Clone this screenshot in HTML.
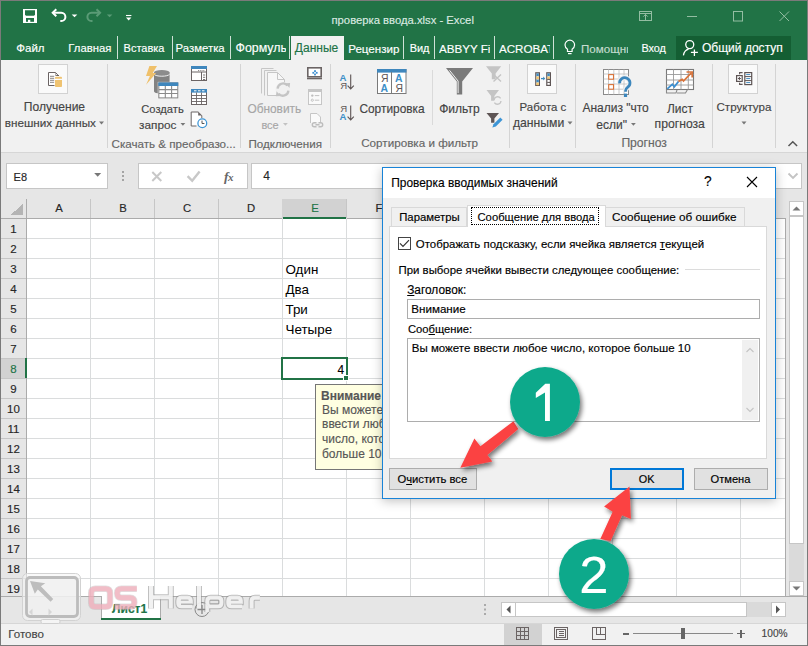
<!DOCTYPE html>
<html><head><meta charset="utf-8">
<style>
*{margin:0;padding:0;box-sizing:border-box}
html,body{width:808px;height:646px;overflow:hidden;background:#fff}
body{position:relative;font-family:"Liberation Sans",sans-serif;font-size:12px;color:#444}
.a{position:absolute}
.t{position:absolute;white-space:nowrap;line-height:1;-webkit-text-stroke:.15px currentColor}
svg{position:absolute;overflow:visible}
</style></head><body>
<!-- title bar + tabs -->
<div class="a" style="left:0;top:0;width:808px;height:60px;background:#217346"></div>
<!-- QAT -->
<svg style="left:0;top:0" width="140" height="34">
 <rect x="23" y="9" width="14" height="14" fill="#fff"/>
 <path d="M25 10.2h10v4.6l-1 1h-8l-1-1z" fill="#217346"/>
 <rect x="26" y="18" width="8" height="3.8" fill="#217346"/>
 <rect x="28" y="19.8" width="2.3" height="2.2" fill="#fff"/>
 <g fill="none" stroke="#fff" stroke-width="2">
  <path d="M53 12.8h8.3a4.1 4.1 0 0 1 0 8.2h-1"/>
  <path d="M56.3 9.3l-3.6 3.5 3.6 3.5"/>
 </g>
 <path d="M71.7 14.5h5.6l-2.8 2.8z" fill="#fff"/>
 <g fill="none" stroke="#5a9b76" stroke-width="2">
  <path d="M99.8 12.8h-8.3a4.1 4.1 0 0 0 0 8.2h1"/>
  <path d="M96.5 9.3l3.6 3.5-3.6 3.5"/>
 </g>
 <path d="M106.8 14.5h5.6l-2.8 2.8z" fill="#5a9b76"/>
 <path d="M126 15.5h5.4" stroke="#fff" stroke-width="1.1"/>
 <path d="M126 17.5h5.4l-2.7 3z" fill="#fff"/>
</svg>
<div class="t" style="left:331.50px;top:15px;font-size:11.27px;color:#dbeae1">проверка ввода.xlsx - Excel</div>
<!-- window controls -->
<svg style="left:0;top:0" width="808" height="34">
 <g fill="none" stroke="#93bda2" stroke-width="1">
  <rect x="639.5" y="11.5" width="12" height="9"/>
  <path d="M639.5 13.5h12M645.5 20.5v-6M643.3 16.6l2.2-2.2 2.2 2.2"/>
  <path d="M687 16.5h10" />
  <rect x="733.5" y="11.5" width="9" height="9.5"/>
  <path d="M779.5 11.5l9.5 9.5M789 11.5l-9.5 9.5"/>
 </g>
</svg>
<!-- tabs -->
<div class="t" style="left:16.30px;top:43px;font-size:11.51px;color:#fff">Файл</div>
<div class="t" style="left:68.30px;top:43px;font-size:11.32px;color:#fff">Главная</div>
<div class="a" style="left:117px;top:36px;width:1px;height:23px;background:#cfe1d6"></div>
<div class="t" style="left:123.60px;top:43px;font-size:11.00px;color:#fff">Вставка</div>
<div class="a" style="left:172px;top:36px;width:1px;height:23px;background:#cfe1d6"></div>
<div class="t" style="left:175.60px;top:43px;font-size:11.36px;color:#fff">Разметка</div>
<div class="a" style="left:230px;top:36px;width:1px;height:23px;background:#cfe1d6"></div>
<div class="a" style="left:235px;top:36px;width:50.5px;height:24px;overflow:hidden"><div class="t" style="left:0.50px;top:6px;font-size:12.40px;color:#fff">Формулы</div></div>
<div class="a" style="left:289px;top:36px;width:1px;height:23px;background:#cfe1d6"></div>
<div class="a" style="left:291px;top:36px;width:53px;height:24px;background:#f1f1f1"></div>
<div class="t" style="left:294.80px;top:42px;font-size:12.04px;color:#217346">Данные</div>
<div class="t" style="left:348.20px;top:43px;font-size:11.60px;color:#fff">Рецензир</div>
<div class="a" style="left:403px;top:36px;width:1px;height:23px;background:#cfe1d6"></div>
<div class="t" style="left:409.70px;top:43px;font-size:10.94px;color:#fff">Вид</div>
<div class="a" style="left:434px;top:36px;width:1px;height:23px;background:#cfe1d6"></div>
<div class="a" style="left:439px;top:36px;width:51px;height:24px;overflow:hidden"><div class="t" style="left:0.00px;top:7px;font-size:11.60px;color:#fff">ABBYY FineReader</div></div>
<div class="a" style="left:494px;top:36px;width:1px;height:23px;background:#cfe1d6"></div>
<div class="a" style="left:499px;top:36px;width:51px;height:24px;overflow:hidden"><div class="t" style="left:0.00px;top:7px;font-size:11.60px;color:#fff">ACROBAT</div></div>
<div class="a" style="left:553px;top:36px;width:1px;height:23px;background:#cfe1d6"></div>
<svg style="left:561.5px;top:38px" width="16" height="20">
 <g fill="none" stroke="#fff" stroke-width="1.2">
  <path d="M5.5 13.5v-2.3C3.8 10 3 8.6 3 7a4.8 4.8 0 0 1 9.6 0c0 1.6-.8 3-2.5 4.2v2.3z"/>
  <path d="M6 15.6h3.6"/>
 </g>
</svg>
<div class="a" style="left:581px;top:36px;width:47px;height:24px;overflow:hidden"><div class="t" style="left:0.00px;top:7px;font-size:11.60px;color:#c6ddd0">Помощник</div></div>
<div class="t" style="left:641.40px;top:43px;font-size:10.87px;color:#fff">Вход</div>
<div class="a" style="left:676px;top:36px;width:115px;height:24px;background:#145e33"></div>
<svg style="left:680px;top:38px" width="22" height="22">
 <g fill="none" stroke="#fff" stroke-width="1.3">
  <circle cx="9.75" cy="6.6" r="4"/>
  <path d="M8.6 11.1C6 11.6 4 14 3.4 17.4"/>
  <path d="M14.4 11.4v6.5M10.9 14.4h7"/>
 </g>
</svg>
<div class="t" style="left:701.90px;top:42px;font-size:12.06px;color:#fff">Общий доступ</div>

<!-- ribbon -->
<div class="a" style="left:0;top:60px;width:808px;height:93px;background:#f1f1f1;border-bottom:1px solid #d6d6d6"></div>
<!-- ribbon separators -->
<svg style="left:0;top:0" width="808" height="160" shape-rendering="crispEdges">
 <path d="M107.5 64v84M240.5 64v84M330.5 64v84M509.5 64v84M575.5 64v84M712.5 64v84M775.5 64v84" stroke="#d4d4d4"/>
 <path d="M432.5 70v55" stroke="#dadada"/>
</svg>
<!-- group 1: Получение внешних данных -->
<div class="a" style="left:38px;top:64px;width:30px;height:30px;background:#fafafa;border:1px solid #d2d2d2"></div>
<svg style="left:0;top:0" width="808" height="160">
 <path d="M54.5 85.5h-6v-13h7l3.5 3.5" fill="#fff" stroke="#6b6464" stroke-width="1"/>
 <path d="M55.5 72.5l3.5 3.5h-3.5z" fill="#6b6464"/>
 <circle cx="56.6" cy="74.6" r=".7" fill="#fff"/>
 <path d="M50 76.3h4.2M50 78.3h4.2M50 80.3h4.2M50 82.3h4.2" stroke="#8a8585" stroke-width="1"/>
 <path d="M55 77.5q0-.8 1-.8h5q1 0 1 .8v1.3h-7z" fill="#efc371"/>
 <path d="M55 80h7v6.3q0 .8-1 .8h-5q-1 0-1-.8z" fill="#efc371"/>
</svg>
<div class="t" style="left:23.80px;top:101px;font-size:12.07px;color:#444">Получение</div>
<div class="t" style="left:4.80px;top:117px;font-size:11.70px;color:#444">внешних данных</div>
<svg style="left:0;top:0" width="808" height="160">
 <path d="M99 121.5h5l-2.5 3z" fill="#777"/>
</svg>
<!-- group 2: Скачать и преобразовать -->
<svg style="left:0;top:0" width="808" height="160">
 <path d="M154 72.6v18.6c0 1.6 3.5 2.4 7.8 2.4s7.8-.8 7.8-2.4V72.6z" fill="#828282"/>
 <ellipse cx="161.8" cy="72.6" rx="7.8" ry="2.6" fill="#8c8c8c"/>
 <path d="M154 74.2c1 1.3 4 2 7.8 2s6.8-.7 7.8-2" stroke="#fff" stroke-width=".9" fill="none"/>
 <path d="M149.4 66h7.6l-4.3 7h3.4l-10 11.8 3.8-8.8h-3.9z" fill="#efc06a"/>
 <rect x="157.8" y="81.9" width="21" height="17" fill="#fff"/>
 <rect x="158.8" y="82.9" width="19" height="15" fill="#fff" stroke="#8a8a8a" stroke-width="1.1"/>
 <rect x="158.3" y="82.4" width="20" height="3.6" fill="#3f87bd"/>
 <path d="M158.8 89.6h19M158.8 93.5h19M165.3 86v12M171.6 86v12" stroke="#8a8a8a" stroke-width="1.1"/>
 <!-- small icons -->
 <rect x="191.5" y="66.5" width="15" height="14" fill="#fff" stroke="#6b6464"/>
 <rect x="191" y="66" width="16" height="3" fill="#3f87bd"/>
 <path d="M191.5 72h15M201.5 72v9" stroke="#6b6464"/>
 <path d="M198 70.6h.9M199.8 70.6h.9M201.6 70.6h.9M203.4 70.6h.9" stroke="#6b6464" stroke-width=".9"/>
 <path d="M203 75h2.2M203 77.3h2.2M203 79.5h2.2" stroke="#6b6464" stroke-width=".9"/>
 <rect x="191.5" y="89.5" width="15" height="15" fill="#fff" stroke="#6b6464"/>
 <rect x="191" y="89" width="16" height="3.6" fill="#3f87bd"/>
 <path d="M194 90.8h2.5M198 90.8h2.5M202 90.8h2.5" stroke="#fff" stroke-width="1"/>
 <path d="M191.5 95.5h15M191.5 98.5h15M191.5 101.5h15M196.5 92.5v12M201.5 92.5v12" stroke="#6b6464" stroke-width=".9"/>
 <path d="M196.5 126h-5.3v-14h7l3.6 3.6v2.5" fill="#fff" stroke="#6b6464" stroke-width="1"/>
 <path d="M198.2 112v3.6h3.6z" fill="#6b6464"/>
 <circle cx="202.3" cy="123.2" r="4.4" fill="#fff" stroke="#3d95d6" stroke-width="1.3"/>
 <path d="M202 120.6v2.9h2.4" stroke="#555" stroke-width="1" fill="none"/>
</svg>
<div class="t" style="left:141.30px;top:104px;font-size:11.16px;color:#444">Создать</div>
<div class="t" style="left:139.10px;top:119px;font-size:11.77px;color:#444">запрос</div>
<svg style="left:0;top:0" width="808" height="160">
 <path d="M180.5 123h4.8l-2.4 2.8z" fill="#777"/>
</svg>
<div class="t" style="left:111.60px;top:138px;font-size:11.61px;color:#666">Скачать &amp; преобразо...</div>
<!-- group 3: Подключения -->
<svg style="left:0;top:0" width="808" height="160">
 <path d="M261.5 93.5v-25h12" fill="none" stroke="#c6c6c6"/>
 <path d="M264.5 95.5v-25h12" fill="none" stroke="#c6c6c6"/>
 <path d="M267.5 95.5v-23h10l7 7v16z" fill="#f7f7f7" stroke="#c6c6c6"/>
 <path d="M277.5 72.5v7h7" fill="none" stroke="#c6c6c6"/>
 <circle cx="283" cy="89.6" r="7.5" fill="#f1f1f1"/>
 <g fill="none" stroke="#c4c4c4" stroke-width="2.3">
  <path d="M277.6 88.6a5.5 5.5 0 0 1 9.8-3"/>
  <path d="M288.4 90.6a5.5 5.5 0 0 1-9.8 3"/>
 </g>
 <path d="M285.3 83.3l4.8-.3-.6 5z" fill="#c4c4c4"/>
 <path d="M280.7 95.9l-4.8.3.6-5z" fill="#c4c4c4"/>
 <rect x="307.8" y="67.8" width="13.4" height="9" fill="#fff" stroke="#6b6464" stroke-width="1.6"/>
 <path d="M307 78.6h15" stroke="#6b6464" stroke-width="1.4"/>
 <g fill="#3d8fd1"><rect x="314.1" y="70.2" width="1.8" height="1.8"/><rect x="314.1" y="73.6" width="1.8" height="1.8"/><rect x="312.4" y="71.9" width="1.8" height="1.8"/><rect x="315.8" y="71.9" width="1.8" height="1.8"/></g>
 <rect x="308.5" y="89.5" width="13" height="15" fill="#fafafa" stroke="#c6c6c6"/>
 <rect x="308" y="89" width="14" height="3" fill="#c6c6c6"/>
 <circle cx="312.3" cy="95.6" r="1.2" fill="#bdbdbd"/><circle cx="312.3" cy="100.2" r="1.1" fill="none" stroke="#bdbdbd" stroke-width=".9"/>
 <path d="M314.8 95.6h4.5M314.8 100.2h4.5" stroke="#c2c2c2"/>
 <path d="M310.5 123v-9.5h6.5l3.5 3.5v5" fill="#fafafa" stroke="#c6c6c6"/>
 <path d="M316.5 126.8h-2.2a2 2 0 0 1 0-4h2.2M318.5 122.8h2.2a2 2 0 0 1 0 4h-2.2M315.5 124.8h4" fill="none" stroke="#bdbdbd" stroke-width="1.4"/>
 <path d="M283 123h4.8l-2.4 2.8z" fill="#c2c2c2"/>
</svg>
<div class="t" style="left:247.40px;top:104px;font-size:11.88px;color:#a6a6a6">Обновить</div>
<div class="t" style="left:261.40px;top:120px;font-size:10.98px;color:#a6a6a6">все</div>
<div class="t" style="left:248.50px;top:138px;font-size:11.62px;color:#666">Подключения</div>
<!-- group 4: Сортировка и фильтр -->
<svg style="left:0;top:0" width="808" height="160">
 <g font-family="Liberation Sans" font-size="9.6">
 <text x="339.6" y="81.4" font-weight="bold" fill="#3d8fc8">A</text>
 <text x="340.2" y="89" fill="#5e5555">Я</text>
 <text x="340.2" y="112.2" fill="#5e5555">Я</text>
 <text x="339.6" y="120" font-weight="bold" fill="#3d8fc8">A</text>
 </g>
 <path d="M350.7 74.5v14.3M347.6 85.6l3.1 3.3 3.1-3.3" fill="none" stroke="#5e5555" stroke-width="1.1"/>
 <path d="M350.7 105.5v14.3M347.6 116.6l3.1 3.3 3.1-3.3" fill="none" stroke="#5e5555" stroke-width="1.1"/>
 <rect x="377.5" y="69.5" width="28.5" height="24" fill="#fff" stroke="#7a7a7a"/>
 <rect x="377" y="69" width="29.5" height="3.6" fill="#3f87bd"/>
 <path d="M391.5 72v21.5" stroke="#7a7a7a"/>
 <g font-family="Liberation Sans" font-size="10.4">
  <text x="381" y="82" fill="#5e5555">Я</text><text x="380.5" y="92" fill="#3d8fc8" font-weight="bold">A</text>
  <text x="395" y="82" fill="#3d8fc8" font-weight="bold">A</text><text x="395.5" y="92" fill="#5e5555">Я</text>
 </g>
 <path d="M446 68h27l-10.8 13.5v13h-5.4v-13z" fill="#7a7a7a"/>
 <path d="M449.5 70.3l8.6 10.8v12" stroke="#fff" stroke-width=".9" fill="none"/>
 <path d="M486 66.3h15.2l-5.6 7.2v5.8h-3.8v-5.8z" fill="#c4c4c4"/>
 <path d="M493.5 74.5l7.5 7M501 74.5l-7.5 7" stroke="#c4c4c4" stroke-width="1.4"/>
 <path d="M486.5 90h12.5l-4.6 6v4.8h-3.3v-4.8z" fill="#c4c4c4"/>
 <path d="M494 100a3.6 3.6 0 0 1 6.6-1.6M501 101a3.6 3.6 0 0 1-6.6 1.6" stroke="#c4c4c4" stroke-width="1.3" fill="none"/>
 <path d="M486.5 113h12.5l-4.6 5.4v4.4h-3.3v-4.4z" fill="#5e5555"/>
 <path d="M492.3 127.6l1.2-3.4 6.8-6.8 2.3 2.3-6.8 6.8z" fill="#3d95d6"/>
</svg>
<div class="t" style="left:359.40px;top:104px;font-size:11.90px;color:#444">Сортировка</div>
<div class="t" style="left:439.20px;top:103px;font-size:12.06px;color:#444">Фильтр</div>
<div class="t" style="left:361.20px;top:137px;font-size:11.66px;color:#666">Сортировка и фильтр</div>
<!-- group 5: Работа с данными -->
<div class="a" style="left:527px;top:64px;width:30px;height:30px;background:#fafafa;border:1px solid #d2d2d2"></div>
<svg style="left:0;top:0" width="808" height="160">
 <rect x="535.8" y="72.8" width="3.6" height="12.6" fill="#fff" stroke="#5e5555" stroke-width="1.2"/>
 <rect x="536.4" y="73.4" width="2.4" height="2.8" fill="#3f8bc0"/><rect x="536.4" y="76.5" width="2.4" height="2.8" fill="#f5c76d"/>
 <rect x="536.4" y="79.6" width="2.4" height="2.8" fill="#3f8bc0"/><rect x="536.4" y="82.6" width="2.4" height="2.6" fill="#f5c76d"/>
 <rect x="546.8" y="72.8" width="3.6" height="12.6" fill="#fff" stroke="#5e5555" stroke-width="1.2"/>
 <rect x="547.4" y="73.4" width="2.4" height="2.8" fill="#3f8bc0"/><rect x="547.4" y="76.5" width="2.4" height="2.8" fill="#f5c76d"/>
 <path d="M547.2 79.4h2.8M547.2 82.4h2.8" stroke="#5e5555" stroke-width="1"/>
 <path d="M541 78.6h3.4" stroke="#3f8bc0" stroke-width="1.3"/>
 <path d="M543.2 76.6l2 2-2 2z" fill="#3f8bc0"/>
 <path d="M567.5 121.5h5l-2.5 3z" fill="#777"/>
</svg>
<div class="t" style="left:519.60px;top:102px;font-size:11.48px;color:#444">Работа с</div>
<div class="t" style="left:512.90px;top:117px;font-size:12.19px;color:#444">данными</div>
<!-- group 6: Прогноз -->
<svg style="left:0;top:0" width="808" height="160">
 <rect x="603.5" y="69.5" width="25" height="25" fill="#fff" stroke="#8a8a8a" stroke-width="1"/>
 <path d="M603.5 74h25M603.5 79h25M603.5 84h25M603.5 89.2h25M608.5 69.5v25M613.8 69.5v25M619 69.5v25M624 69.5v25" stroke="#bdbdbd" stroke-width=".8"/>
 <rect x="608.7" y="74.6" width="4.8" height="4.6" fill="#fff" stroke="#d9733a" stroke-width="1.1"/>
 <rect x="608.7" y="84.6" width="4.8" height="4.6" fill="#fff" stroke="#d9733a" stroke-width="1.1"/>
 <path d="M617 78h15v20h-15z" fill="#fff" opacity="0"/>
 <path d="M619.6 83.3a5.2 5.2 0 1 1 8.2 3.8c-1.6 1.1-2.3 2-2.3 4v.6" stroke="#f1f1f1" stroke-width="5" fill="none"/>
 <path d="M619.6 83.3a5.2 5.2 0 1 1 8.2 3.8c-1.6 1.1-2.3 2-2.3 4v.6" stroke="#3d87bd" stroke-width="2.8" fill="none"/>
 <rect x="623.9" y="93.6" width="3.2" height="3.4" fill="#3d87bd"/>
 <rect x="666.5" y="69.5" width="27" height="20" fill="#fff" stroke="#7a7a7a" stroke-width="1.1"/>
 <path d="M666.5 74.5h27M666.5 80h27M666.5 85h27M673.5 69.5v20M681 69.5v20M688.3 69.5v20" stroke="#9a9a9a" stroke-width=".9"/>
 <path d="M666.5 89.5v3.5h9.5l1-3M677 93h8.5l2-3.5" fill="none" stroke="#8a8a8a" stroke-width="1.1"/>
 <path d="M667.3 88.8l5-4.5 2 2.5 4.3-5.4" stroke="#3d8fd1" stroke-width="1.7" fill="none"/>
 <path d="M678.4 81.6l3.8-2.2 1.3 1.6 8-8.4" stroke="#d9733a" stroke-width="1.7" fill="none"/>
 <path d="M686.5 72h5.7v5.5" stroke="#d9733a" stroke-width="1.7" fill="none"/>
 <path d="M631 123h4.8l-2.4 2.8z" fill="#777"/>
</svg>
<div class="t" style="left:582.40px;top:102px;font-size:12.00px;color:#444">Анализ "что</div>
<div class="t" style="left:596.20px;top:119px;font-size:12.06px;color:#444">если"</div>
<div class="t" style="left:667.00px;top:104px;font-size:11.97px;color:#444">Лист</div>
<div class="t" style="left:654.60px;top:118px;font-size:12.18px;color:#444">прогноза</div>
<div class="t" style="left:621.40px;top:137px;font-size:12.15px;color:#666">Прогноз</div>
<!-- group 7: Структура -->
<div class="a" style="left:728px;top:64px;width:30px;height:30px;background:#fafafa;border:1px solid #d2d2d2"></div>
<svg style="left:0;top:0" width="808" height="160">
 <rect x="736.6" y="75.6" width="5.6" height="5.8" fill="#fff" stroke="#5e5555" stroke-width="1.2"/>
 <path d="M737.9 78.5h3M739.4 77v3" stroke="#5e5555" stroke-width="1"/>
 <path d="M739.6 74.2v-1.6h3M739.6 82.8v1.6h3" stroke="#5e5555" stroke-width="1.1" fill="none"/>
 <rect x="744.8" y="72.6" width="6.9" height="12" fill="#fff" stroke="#5e5555" stroke-width="1.2"/>
 <path d="M744.8 76.6h6.9M744.8 80.6h6.9" stroke="#5e5555" stroke-width="1"/>
 <path d="M746.2 74.6h4M746.2 78.6h4M746.2 82.6h4" stroke="#3f8bc0" stroke-width="1"/>
 <path d="M741.5 121.5h5l-2.5 3z" fill="#777"/>
 <path d="M788.5 146l4.3-4.3 4.3 4.3" stroke="#555" stroke-width="1.5" fill="none"/>
</svg>
<div class="t" style="left:716.50px;top:102px;font-size:11.57px;color:#444">Структура</div>

<!-- formula bar area -->
<div class="a" style="left:0;top:153px;width:808px;height:46px;background:#e6e6e6"></div>
<div class="a" style="left:6px;top:163px;width:102px;height:26px;background:#fff;border:1px solid #c6c6c6"></div>
<div class="t" style="left:13.60px;top:172px;font-size:11.04px;color:#262626">E8</div>
<svg style="left:0;top:0" width="808" height="200">
 <path d="M94.2 173h7l-3.5 3.8z" fill="#777"/>
 <g fill="#a4a4a4"><rect x="122" y="171" width="2" height="2"/><rect x="122" y="175" width="2" height="2"/><rect x="122" y="179" width="2" height="2"/></g>
</svg>
<div class="a" style="left:138px;top:163px;width:110px;height:26px;background:#fff;border:1px solid #c6c6c6"></div>
<svg style="left:0;top:0" width="808" height="200">
 <g stroke="#c8c8c8" stroke-width="2" fill="none">
  <path d="M152.3 172l9 9M161.3 172l-9 9"/>
  <path d="M187.6 176.2l4.6 4.6 7.4-9.4" stroke-width="2.4"/>
 </g>
</svg>
<div class="t" style="left:224px;top:170px;font-family:'Liberation Serif';font-style:italic;font-weight:bold;font-size:13.5px;color:#666;-webkit-text-stroke:0">f<span style="font-size:11px;margin-left:-.5px">x</span></div>
<div class="a" style="left:251px;top:163px;width:551px;height:26px;background:#fff;border:1px solid #c6c6c6"></div>
<div class="t" style="left:263.20px;top:170px;font-size:12.04px;color:#262626">4</div>
<svg style="left:0;top:0" width="808" height="200">
 <path d="M788.5 173.5l4.5 4.5 4.5-4.5" stroke="#c4c4c4" stroke-width="1.9" fill="none"/>
</svg>

<!-- grid -->
<div class="a" style="left:0;top:199px;width:786px;height:19px;background:#e6e6e6"></div>
<div class="a" style="left:282px;top:199px;width:65px;height:19px;background:#d2d2d2"></div>
<div class="a" style="left:283px;top:217px;width:64px;height:2px;background:#217346"></div>
<div class="a" style="left:0;top:219px;width:27px;height:377px;background:#e6e6e6"></div>
<div class="a" style="left:0;top:358px;width:27px;height:20px;background:#d2d2d2"></div>
<svg style="left:0;top:0" width="808" height="646" shape-rendering="crispEdges">
 <path d="M11 214.5h12V204z" fill="#b4b4b4"/>
 <g stroke="#dadcdd" stroke-width="1">
  <path d="M90.5 218v378M154.5 218v378M218.5 218v378M282.5 218v378M346.5 218v378M410.5 218v378M484.5 218v378M548.5 218v378M612.5 218v378M676.5 218v378M740.5 218v378"/>
  <path d="M27 238.5h758M27 258.5h758M27 278.5h758M27 298.5h758M27 318.5h758M27 338.5h758M27 358.5h758M27 378.5h758M27 398.5h758M27 418.5h758M27 438.5h758M27 458.5h758M27 478.5h758M27 498.5h758M27 518.5h758M27 538.5h758M27 558.5h758M27 578.5h758"/>
 </g>
 <g stroke="#c6c6c6" stroke-width="1">
  <path d="M90.5 199v19M154.5 199v19M218.5 199v19M346.5 199v19M410.5 199v19M484.5 199v19M548.5 199v19M612.5 199v19M676.5 199v19M740.5 199v19"/>
  <path d="M0 238.5h26M0 258.5h26M0 278.5h26M0 298.5h26M0 318.5h26M0 338.5h26M0 358.5h26M0 378.5h26M0 398.5h26M0 418.5h26M0 438.5h26M0 458.5h26M0 478.5h26M0 498.5h26M0 518.5h26M0 538.5h26M0 558.5h26M0 578.5h26"/>
 </g>
 <path d="M26.5 199v397M0 218.5h282M347 218.5h438M785.5 218v378" stroke="#ababab" stroke-width="1"/>
 <path d="M26 358v20" stroke="#217346" stroke-width="2"/>
</svg>
<div class="t" style="left:27px;top:203.03px;width:64px;text-align:center;font-size:11.3px;color:#262626">A</div>
<div class="t" style="left:91px;top:203.03px;width:64px;text-align:center;font-size:11.3px;color:#262626">B</div>
<div class="t" style="left:155px;top:203.03px;width:64px;text-align:center;font-size:11.3px;color:#262626">C</div>
<div class="t" style="left:219px;top:203.03px;width:64px;text-align:center;font-size:11.3px;color:#262626">D</div>
<div class="t" style="left:283px;top:203.03px;width:64px;text-align:center;font-size:11.3px;color:#217346">E</div>
<div class="t" style="left:347px;top:203.03px;width:64px;text-align:center;font-size:11.3px;color:#262626">F</div>

<div class="t" style="left:0;top:224.27px;width:27px;text-align:center;font-size:11.5px;color:#262626">1</div>
<div class="t" style="left:0;top:244.27px;width:27px;text-align:center;font-size:11.5px;color:#262626">2</div>
<div class="t" style="left:0;top:264.27px;width:27px;text-align:center;font-size:11.5px;color:#262626">3</div>
<div class="t" style="left:0;top:284.27px;width:27px;text-align:center;font-size:11.5px;color:#262626">4</div>
<div class="t" style="left:0;top:304.27px;width:27px;text-align:center;font-size:11.5px;color:#262626">5</div>
<div class="t" style="left:0;top:324.27px;width:27px;text-align:center;font-size:11.5px;color:#262626">6</div>
<div class="t" style="left:0;top:344.27px;width:27px;text-align:center;font-size:11.5px;color:#262626">7</div>
<div class="t" style="left:0;top:364.27px;width:27px;text-align:center;font-size:11.5px;color:#217346">8</div>
<div class="t" style="left:0;top:384.27px;width:27px;text-align:center;font-size:11.5px;color:#262626">9</div>
<div class="t" style="left:0;top:404.27px;width:27px;text-align:center;font-size:11.5px;color:#262626">10</div>
<div class="t" style="left:0;top:424.27px;width:27px;text-align:center;font-size:11.5px;color:#262626">11</div>
<div class="t" style="left:0;top:444.27px;width:27px;text-align:center;font-size:11.5px;color:#262626">12</div>
<div class="t" style="left:0;top:464.27px;width:27px;text-align:center;font-size:11.5px;color:#262626">13</div>
<div class="t" style="left:0;top:484.27px;width:27px;text-align:center;font-size:11.5px;color:#262626">14</div>
<div class="t" style="left:0;top:504.27px;width:27px;text-align:center;font-size:11.5px;color:#262626">15</div>
<div class="t" style="left:0;top:524.27px;width:27px;text-align:center;font-size:11.5px;color:#262626">16</div>
<div class="t" style="left:0;top:544.27px;width:27px;text-align:center;font-size:11.5px;color:#262626">17</div>
<div class="t" style="left:0;top:564.27px;width:27px;text-align:center;font-size:11.5px;color:#262626">18</div>
<div class="t" style="left:0;top:584.27px;width:27px;text-align:center;font-size:11.5px;color:#262626">19</div>


<!-- v-scrollbar -->
<div class="a" style="left:786px;top:199px;width:22px;height:397px;background:#e6e6e6"></div>
<div class="a" style="left:789px;top:201px;width:15px;height:15px;background:#fff;border:1px solid #c6c6c6"></div>
<div class="a" style="left:789px;top:216px;width:15px;height:328px;background:#fff;border:1px solid #c6c6c6"></div>
<div class="a" style="left:789px;top:544px;width:15px;height:37px;background:#dadada"></div>
<div class="a" style="left:789px;top:581px;width:15px;height:15px;background:#fff;border:1px solid #c6c6c6"></div>
<svg style="left:0;top:0" width="808" height="646">
 <path d="M792.5 210.5h8l-4-4z" fill="#777"/>
 <path d="M792.5 586.5h8l-4 4z" fill="#777"/>
</svg>

<!-- sheet tabs bar -->
<div class="a" style="left:0;top:596px;width:808px;height:27px;background:#e6e6e6;border-top:1px solid #ababab"></div>
<div class="a" style="left:101px;top:596px;width:60px;height:24px;background:#fff;border-left:1px solid #ababab;border-right:1px solid #ababab"></div>
<div class="a" style="left:101px;top:618px;width:60px;height:2px;background:#217346"></div>
<div class="t" style="left:112.00px;top:603px;font-size:12.09px;font-weight:bold;color:#217346">Лист1</div>
<svg style="left:0;top:0" width="808" height="646">
 <circle cx="202" cy="609.5" r="7" fill="none" stroke="#888" stroke-width="1"/>
 <path d="M197.5 609.5h9M202 605v9" stroke="#888" stroke-width="1.3"/>
 <g fill="#aaa"><rect x="484" y="604" width="2" height="2"/><rect x="484" y="608.5" width="2" height="2"/><rect x="484" y="613" width="2" height="2"/></g>
</svg>
<div class="a" style="left:501px;top:602px;width:285px;height:15px;background:#dadada"></div>
<div class="a" style="left:501px;top:602px;width:15px;height:15px;background:#fff;border:1px solid #c6c6c6"></div>
<div class="a" style="left:515px;top:602px;width:232px;height:15px;background:#fff;border:1px solid #c6c6c6"></div>
<div class="a" style="left:771px;top:602px;width:15px;height:15px;background:#fff;border:1px solid #c6c6c6"></div>
<svg style="left:0;top:0" width="808" height="646">
 <path d="M510.5 605.5v8l-4-4z" fill="#555"/>
 <path d="M776 605.5v8l4-4z" fill="#555"/>
</svg>

<!-- status bar -->
<div class="a" style="left:0;top:623px;width:808px;height:23px;background:#f1f1f1;border-top:1px solid #d6d6d6"></div>
<div class="t" style="left:8.30px;top:629px;font-size:11.56px;color:#444">Готово</div>
<div class="a" style="left:504px;top:624px;width:38px;height:21px;background:#d2d2d2"></div>
<svg style="left:0;top:0" width="808" height="646" shape-rendering="crispEdges">
 <g fill="none" stroke="#6b6464" stroke-width="1.2">
  <rect x="516.5" y="627.5" width="12" height="12"/>
  <path d="M520.5 627.5v12M524.5 627.5v12M516.5 631.5h12M516.5 635.5h12"/>
  <rect x="554.5" y="627.5" width="13" height="12"/>
  <rect x="556.5" y="629.5" width="9" height="8"/>
  <path d="M558.5 631.5h5M558.5 633.5h5M558.5 635.5h5"/>
  <rect x="592.5" y="627.5" width="13" height="12"/>
  <path d="M596.5 627.5v7h9M600.5 627.5v7"/>
 </g>
 <path d="M623 633.5h6M633 633.5h100" stroke="#888" stroke-width="1"/>
 <path d="M623 633h6v1.5h-6z" fill="#666"/>
 <rect x="681" y="628" width="4" height="11" fill="#666"/>
 <path d="M737 633.5h8M741 629.5v8" stroke="#666" stroke-width="1.6"/>
</svg>
<div class="t" style="left:761.60px;top:629px;font-size:10.17px;color:#444">100%</div>

<!-- cell contents -->
<div class="t" style="left:285.50px;top:263px;font-size:13.40px;color:#000;-webkit-text-stroke:0">Один</div>
<div class="t" style="left:285.50px;top:283px;font-size:13.40px;color:#000;-webkit-text-stroke:0">Два</div>
<div class="t" style="left:285.50px;top:303px;font-size:13.40px;color:#000;-webkit-text-stroke:0">Три</div>
<div class="t" style="left:285.50px;top:323px;font-size:13.40px;color:#000;-webkit-text-stroke:0">Четыре</div>
<div class="a" style="left:281px;top:357px;width:67px;height:23px;border:2px solid #217346"></div>
<div class="a" style="left:343px;top:375px;width:6px;height:6px;background:#217346;border:1px solid #fff"></div>
<div class="t" style="left:337.40px;top:365px;font-size:11.87px;color:#000">4</div>
<!-- tooltip -->
<div class="a" style="left:315px;top:384px;width:80px;height:86px;background:#ffffe1;border:1px solid #767676"></div>
<div class="t" style="left:321.00px;top:390px;font-size:12.00px;font-weight:bold;color:#575757">Внимание</div>
<div class="t" style="left:322.00px;top:404px;font-size:12.00px;color:#575757">Вы можете</div>
<div class="t" style="left:322.00px;top:418px;font-size:12.00px;color:#575757">ввести любое</div>
<div class="t" style="left:322.00px;top:433px;font-size:12.00px;color:#575757">число, которое</div>
<div class="t" style="left:322.00px;top:448px;font-size:12.00px;color:#575757">больше 10</div>

<!-- dialog -->
<div class="a" style="left:382px;top:167px;width:394px;height:332px;background:#f0f0f0;border:1px solid #1883d7;box-shadow:0 2px 10px rgba(0,0,0,.25)"></div>
<div class="a" style="left:383px;top:168px;width:392px;height:30px;background:#fff"></div>
<div class="t" style="left:391.20px;top:178px;font-size:11.93px;color:#000">Проверка вводимых значений</div>
<div class="t" style="left:703.90px;top:175px;font-size:13.80px;color:#000">?</div>
<svg style="left:0;top:0" width="808" height="646">
 <path d="M747 177l10 10M757 177l-10 10" stroke="#000" stroke-width="1.1"/>
</svg>
<!-- tabs -->
<div class="a" style="left:391px;top:207px;width:76px;height:20px;background:#f0f0f0;border:1px solid #d9d9d9;border-bottom:none"></div>
<div class="a" style="left:605px;top:207px;width:140px;height:20px;background:#f0f0f0;border:1px solid #d9d9d9;border-bottom:none"></div>
<div class="a" style="left:389px;top:226px;width:378px;height:233px;background:#fff;border:1px solid #d9d9d9"></div>
<div class="a" style="left:467px;top:205px;width:139px;height:22px;background:#fff;border:1px solid #d9d9d9;border-bottom:none"></div>
<div class="a" style="left:471px;top:207px;width:128px;height:18px;border:1px dotted #000"></div>
<div class="t" style="left:399.20px;top:212px;font-size:11.33px;color:#000">Параметры</div>
<div class="t" style="left:477.50px;top:212px;font-size:11.26px;color:#000">Сообщение для ввода</div>
<div class="t" style="left:612.00px;top:211px;font-size:11.73px;color:#000">Сообщение об ошибке</div>
<!-- checkbox -->
<div class="a" style="left:398px;top:237px;width:13px;height:13px;border:1px solid #444;background:#fff"></div>
<svg style="left:0;top:0" width="808" height="646">
 <path d="M400 243.4l3 3.1 6-6.3" stroke="#333" stroke-width="1.2" fill="none"/>
</svg>
<div class="t" style="left:415.80px;top:239px;font-size:11.43px;color:#000">Отображать подсказку, если ячейка является <u>т</u>екущей</div>
<div class="t" style="left:398.50px;top:265px;font-size:11.42px;color:#000">При выборе ячейки вывести следующее сообщение:</div>
<div class="a" style="left:685px;top:269px;width:75px;height:1px;background:#dcdcdc"></div>
<div class="t" style="left:407.20px;top:285px;font-size:11.87px;color:#000"><u>З</u>аголовок:</div>
<div class="a" style="left:407px;top:299px;width:353px;height:20px;background:#fff;border:1px solid #adadad"></div>
<div class="t" style="left:411.30px;top:303px;font-size:11.62px;color:#000">Внимание</div>
<div class="t" style="left:407.90px;top:324px;font-size:11.24px;color:#000">Соо<u>б</u>щение:</div>
<div class="a" style="left:407px;top:338px;width:353px;height:84px;background:#fff;border:1px solid #adadad"></div>
<div class="a" style="left:742px;top:340px;width:16px;height:80px;background:#f0f0f0"></div>
<svg style="left:0;top:0" width="808" height="646">
 <path d="M746.5 352l3.5-3.5 3.5 3.5M746.5 408l3.5 3.5 3.5-3.5" stroke="#c4c4c4" stroke-width="1.1" fill="none"/>
</svg>
<div class="t" style="left:411.80px;top:343px;font-size:11.51px;color:#000">Вы можете ввести любое число, которое больше 10</div>
<!-- buttons -->
<div class="a" style="left:389px;top:468px;width:88px;height:22px;background:#e1e1e1;border:1px solid #adadad"></div>
<div class="t" style="left:397.40px;top:474px;font-size:11.26px;color:#000">О<u>ч</u>истить все</div>
<div class="a" style="left:610px;top:468px;width:74px;height:22px;background:#e1e1e1;border:2px solid #0078d7"></div>
<div class="t" style="left:638.80px;top:474px;font-size:10.87px;color:#000">OK</div>
<div class="a" style="left:694px;top:468px;width:74px;height:22px;background:#e1e1e1;border:1px solid #adadad"></div>
<div class="t" style="left:710.50px;top:474px;font-size:11.15px;color:#000">Отмена</div>

<!-- annotations -->
<svg style="left:0;top:0" width="808" height="646">
 <defs>
  <filter id="sh" x="-30%" y="-30%" width="160%" height="160%"><feGaussianBlur in="SourceAlpha" stdDeviation="2.5"/><feOffset dx="2" dy="3"/><feComponentTransfer><feFuncA type="linear" slope=".55"/></feComponentTransfer><feMerge><feMergeNode/><feMergeNode in="SourceGraphic"/></feMerge></filter>
 </defs>
 <g filter="url(#sh)">
  <path d="M460.3 467.7L474.4 438.4L480.4 446.2L513.4 421.3L518.3 429.1L487.4 454.9L492.3 461.4Z" fill="#fb4343"/>
  <path d="M629.5 486.4L630.9 518.9L622 515.3L610.6 541L600.3 538.9L612.7 511.8L604.1 506.6Z" fill="#fb4343"/>
 </g>
 <g filter="url(#sh)">
  <circle cx="545" cy="402" r="35" fill="#0da98b"/>
  <circle cx="594" cy="574" r="35" fill="#0da98b"/>
 </g>
</svg>
<svg style="left:0;top:0" width="808" height="646"><path d="M549.9 383.8V420.9H545V392.4L535.8 397.9V392.8L545.3 383.8Z" fill="#fff"/></svg>
<div class="t" style="left:579.30px;top:549px;font-size:52.50px;color:#fff">2</div>
<!-- watermark -->
<svg style="left:0;top:0" width="808" height="646">
 <g>
 <rect x="22.5" y="573.5" width="58" height="47" rx="5" fill="rgba(245,245,245,.6)" stroke="#d2d2d2" stroke-width="1"/>
 <rect x="26.5" y="577.5" width="51" height="39" rx="3.5" fill="rgba(240,240,240,.7)" stroke="#bcbcbc" stroke-width="2.8"/>
 <path d="M30 581l4.8 12.8 3-4.4 12.8 12.3 2.6-2.6-12.3-12.8 4.4-3z" fill="#bdbdbd"/>
 <path d="M32.5 608.5l-3.5 3.5 3.5 3.5zM48.5 608.5l3.5 3.5-3.5 3.5z" fill="#d6d6d6"/>
 <rect x="41" y="619.5" width="19" height="4" rx="1.5" fill="#f4f4f4" stroke="#cfcfcf" stroke-width="1"/>
 </g>
</svg>
<svg style="left:0;top:0" width="808" height="646">
 <path d="M95.5 588.7H105.7Q110 588.7 110 593V602.4Q110 606.7 105.7 606.7H95.5Q91.2 606.7 91.2 602.4V593Q91.2 588.7 95.5 588.7Z M136.8 588.7H121.5Q117.2 588.7 117.2 593V593.5Q117.2 597.7 121.5 597.7H130Q134.3 597.7 134.3 602V602.4Q134.3 606.7 130 606.7H114.7" fill="none" stroke="rgba(170,170,170,.35)" stroke-width="6.4"/>
 <path d="M95.5 588.7H105.7Q110 588.7 110 593V602.4Q110 606.7 105.7 606.7H95.5Q91.2 606.7 91.2 602.4V593Q91.2 588.7 95.5 588.7Z M136.8 588.7H121.5Q117.2 588.7 117.2 593V593.5Q117.2 597.7 121.5 597.7H130Q134.3 597.7 134.3 602V602.4Q134.3 606.7 130 606.7H114.7" fill="none" stroke="rgba(246,175,188,.72)" stroke-width="5"/>
 <path d="M151 586V608.6M170.8 586V608.6M151 597.3H170.8 M178.3 602.2H190.8V601Q190.8 597.8 187.5 597.8H181.5Q178.3 597.8 178.3 601V603Q178.3 606.3 181.5 606.3H192 M199 586V608.6 M207.3 612V601Q207.3 597.8 210.6 597.8H218.2Q221.4 597.8 221.4 601V603Q221.4 606.3 218.2 606.3H207.3 M228.3 602.2H240.8V601Q240.8 597.8 237.5 597.8H231.5Q228.3 597.8 228.3 601V603Q228.3 606.3 231.5 606.3H242 M251.6 608.6V601Q251.6 597.8 255 597.8H259.9" fill="none" stroke="rgba(140,140,140,.55)" stroke-width="6"/>
 <path d="M151 586V608.6M170.8 586V608.6M151 597.3H170.8 M178.3 602.2H190.8V601Q190.8 597.8 187.5 597.8H181.5Q178.3 597.8 178.3 601V603Q178.3 606.3 181.5 606.3H192 M199 586V608.6 M207.3 612V601Q207.3 597.8 210.6 597.8H218.2Q221.4 597.8 221.4 601V603Q221.4 606.3 218.2 606.3H207.3 M228.3 602.2H240.8V601Q240.8 597.8 237.5 597.8H231.5Q228.3 597.8 228.3 601V603Q228.3 606.3 231.5 606.3H242 M251.6 608.6V601Q251.6 597.8 255 597.8H259.9" fill="none" stroke="rgba(250,250,250,.85)" stroke-width="4"/>
 <path d="M181 600.2H188.6M181 604.2H192.5M181 604.2H192.5M210 600.2H218.7V604H210M231 600.2H238.6M231 604.2H242.5" fill="none" stroke="rgba(150,150,150,.6)" stroke-width="1"/>
</svg>
<!-- outer border -->
<div class="a" style="left:0;top:0;width:808px;height:646px;border:1px solid #7a7a7a"></div>
</body></html>
